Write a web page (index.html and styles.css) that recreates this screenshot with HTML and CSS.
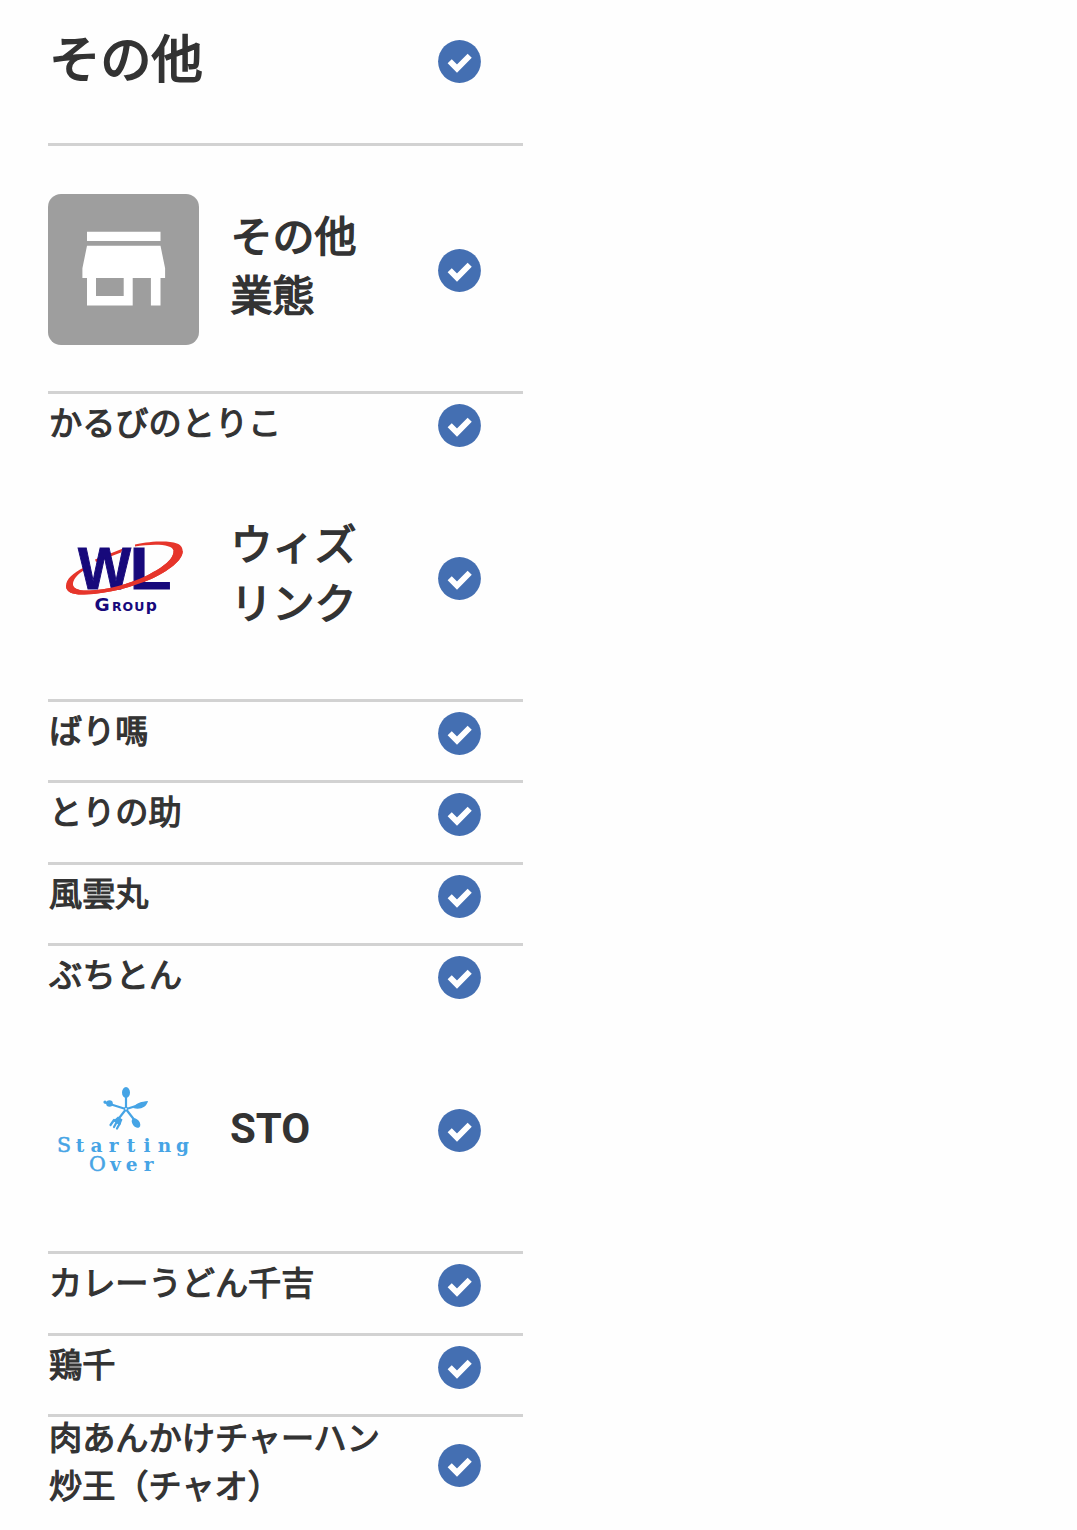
FILE: index.html
```
<!DOCTYPE html>
<html lang="ja">
<head>
<meta charset="utf-8">
<title>その他</title>
<link rel="stylesheet" href="styles.css">
</head>
<body>
<svg width="0" height="0" class="defs">
  <symbol id="check" viewBox="0 0 43 43"><circle cx="21.5" cy="21.5" r="21.4" fill="#446fb2"/><path d="M11.7 21.2 19 28.6 31.7 15.7" fill="none" stroke="#fff" stroke-width="5.8"/></symbol>
</svg>
<main class="list">
  <header class="row category"><h1 class="name">その他</h1><svg class="check"><use href="#check"/></svg></header>

  <div class="row brand">
    <svg class="logo" viewBox="0 0 151 151">
      <rect width="151" height="151" rx="13" fill="#9e9e9e"/>
      <path fill="#fff" fill-rule="evenodd" d="M39 37.7h73.5v9.4H39zM39 51.8h73.5l4.6 22.5v9.6h-4.6v27.6h-9.6V83.9H84.7v27.6H39V83.9h-4.6v-9.6zM48 83.9v18h27.7v-18z"/>
    </svg>
    <h2 class="name">その他<br>業態</h2><svg class="check"><use href="#check"/></svg>
  </div>
  <div class="row shop last"><p class="name">かるびのとりこ</p><svg class="check"><use href="#check"/></svg></div>

  <div class="row brand">
    <svg class="logo" viewBox="0 0 151 151">
      <path d="M36 65.500C25 71 18 77 18 84C18 91 27 93 36 92.500C62 91.500 84 85 102 77.500C121 69 135 58 134.700 49C134.500 40 123 39.500 112 39.500C102 39.700 93 41 87 42.500V44.500C102 42 125 41 125.500 49C126 58 112 67 98 74C80 82.500 58 88 42 88.500C31 89 24 87 25 81C26 76 31 71 37 67.500ZM47 57.500 75 46.500 73 50.500 48 60Z" fill="#e6352b"/>
      <g class="initials">
        <text x="30" y="87" textLength="53" lengthAdjust="spacingAndGlyphs">W</text>
        <text x="81.500" y="87" textLength="42" lengthAdjust="spacingAndGlyphs">L</text>
      </g>
      <path d="M25 81C24 87 31 89 42 88.500C58 88 80 82.500 98 74C112 67 126 58 125.500 49L134.700 49C135 58 121 69 102 77.500C84 85 62 91.500 36 92.500C27 93 18 91 18 84Z" fill="#e6352b"/>
      <text class="group" x="54 68.700 79.700 91.300 103.300" y="108.800"><tspan class="cap">G</tspan>ROU<tspan class="tail">p</tspan></text>
    </svg>
    <h2 class="name">ウィズ<br>リンク</h2><svg class="check"><use href="#check"/></svg>
  </div>
  <div class="row shop"><p class="name">ばり嗎</p><svg class="check"><use href="#check"/></svg></div>
  <div class="row shop"><p class="name">とりの助</p><svg class="check"><use href="#check"/></svg></div>
  <div class="row shop"><p class="name">風雲丸</p><svg class="check"><use href="#check"/></svg></div>
  <div class="row shop last"><p class="name">ぶちとん</p><svg class="check"><use href="#check"/></svg></div>

  <div class="row brand">
    <svg class="logo" viewBox="0 0 151 151">
      <g stroke="#46a4e5" stroke-width="2.200" fill="none" stroke-linecap="round">
        <path d="M78 42v11M76 54.500 57 48.500M80 54.500 91 51M77 56.500l-7 9M79 56.500l7 9"/>
        <circle cx="78" cy="55" r="1.600" stroke-width="1.300"/>
        <path d="M66 66 62.500 71M69 67.500 66 73M72 69 69 74.500"/>
      </g>
      <g fill="#46a4e5">
        <ellipse cx="78" cy="38.500" rx="4" ry="5.400"/>
        <path d="M85 54C89 48 93 48 100 47C98.500 53.500 92 56 85 54ZM70 62.500l4.500 3-2.500 6-7-4.500z"/>
        <ellipse cx="88" cy="69" rx="3.500" ry="5.400" transform="rotate(-38 88 69)"/>
        <circle cx="61.500" cy="49.500" r="3.300"/><circle cx="57" cy="48" r="1.600"/>
      </g>
      <g class="starting">
        <text x="16 32 48.500 65.500 83 99 116.500 134.500" y="98"><tspan class="thin">S</tspan>tarting</text>
        <text x="49.500 67.300 83.700 100.500" y="117"><tspan class="thin">O</tspan>ver</text>
      </g>
    </svg>
    <h2 class="name latin">STO</h2><svg class="check"><use href="#check"/></svg>
  </div>
  <div class="row shop"><p class="name">カレーうどん千吉</p><svg class="check"><use href="#check"/></svg></div>
  <div class="row shop"><p class="name">鶏千</p><svg class="check"><use href="#check"/></svg></div>
  <div class="row shop last two-line"><p class="name">肉あんかけチャーハン<br>炒王（チャオ）</p><svg class="check"><use href="#check"/></svg></div>
</main>
</body>
</html>
```
FILE: styles.css
```
* { box-sizing: border-box; }
body {
  margin: 0;
  background: #fefefe;
  color: #333;
  font-family: Roboto, "Noto Sans CJK JP", sans-serif;
}
.defs { display: block; height: 0; }
.list { width: 475px; margin-left: 48px; }
.row {
  display: flex;
  align-items: center;
  padding-right: 42px;
  border-bottom: 3px solid #d2d2d2;
}
.name {
  flex: 1;
  margin: 0;
  padding-left: 1px;
  font-weight: 400;
  -webkit-text-stroke: 0.036em #333;
  white-space: nowrap;
}
.check { flex: none; width: 43px; height: 43px; }
.category { height: 146px; padding-bottom: 21px; }
.category .name { font-size: 51.3px; line-height: 76px; }
.brand { height: 248px; padding-top: 3px; }
.brand .name { font-size: 42px; line-height: 59px; padding: 0 0 6px 0.5px; }
.brand .latin { font-weight: 700; -webkit-text-stroke: 0; padding: 0 0 4px; }
.logo { flex: none; width: 151px; height: 151px; margin: 0 31px 1px 0; }
.shop { height: 81.4px; padding-bottom: 15.2px; }
.shop .name { font-size: 33.2px; line-height: 48px; padding-bottom: 3px; }
.shop.last { height: auto; min-height: 60px; padding: 10px 42px 7px 0; border: 0; }
.shop.last .name { margin: -10px 0; }
.shop.two-line { padding: 0 42px 0 0; }
.shop.two-line .name { margin: -1.5px 0 0; padding: 0 0 0 1px; }
.shop.two-line .check { margin-top: 2px; }
.initials {
  font: 700 59px "Liberation Sans", sans-serif;
  fill: #17097b;
  stroke: #17097b;
  stroke-width: 1px;
}
.group { font: 700 12.5px "DejaVu Sans", sans-serif; fill: #17097b; text-anchor: middle; }
.cap { font-size: 18.5px; }
.tail { font-size: 15.5px; }
.starting {
  font: 700 18.5px "DejaVu Serif", serif;
  fill: #46a4e5;
  text-anchor: middle;
}
.thin { font-size: 20.5px; font-weight: 400; stroke: #46a4e5; stroke-width: 0.5px; }
```
